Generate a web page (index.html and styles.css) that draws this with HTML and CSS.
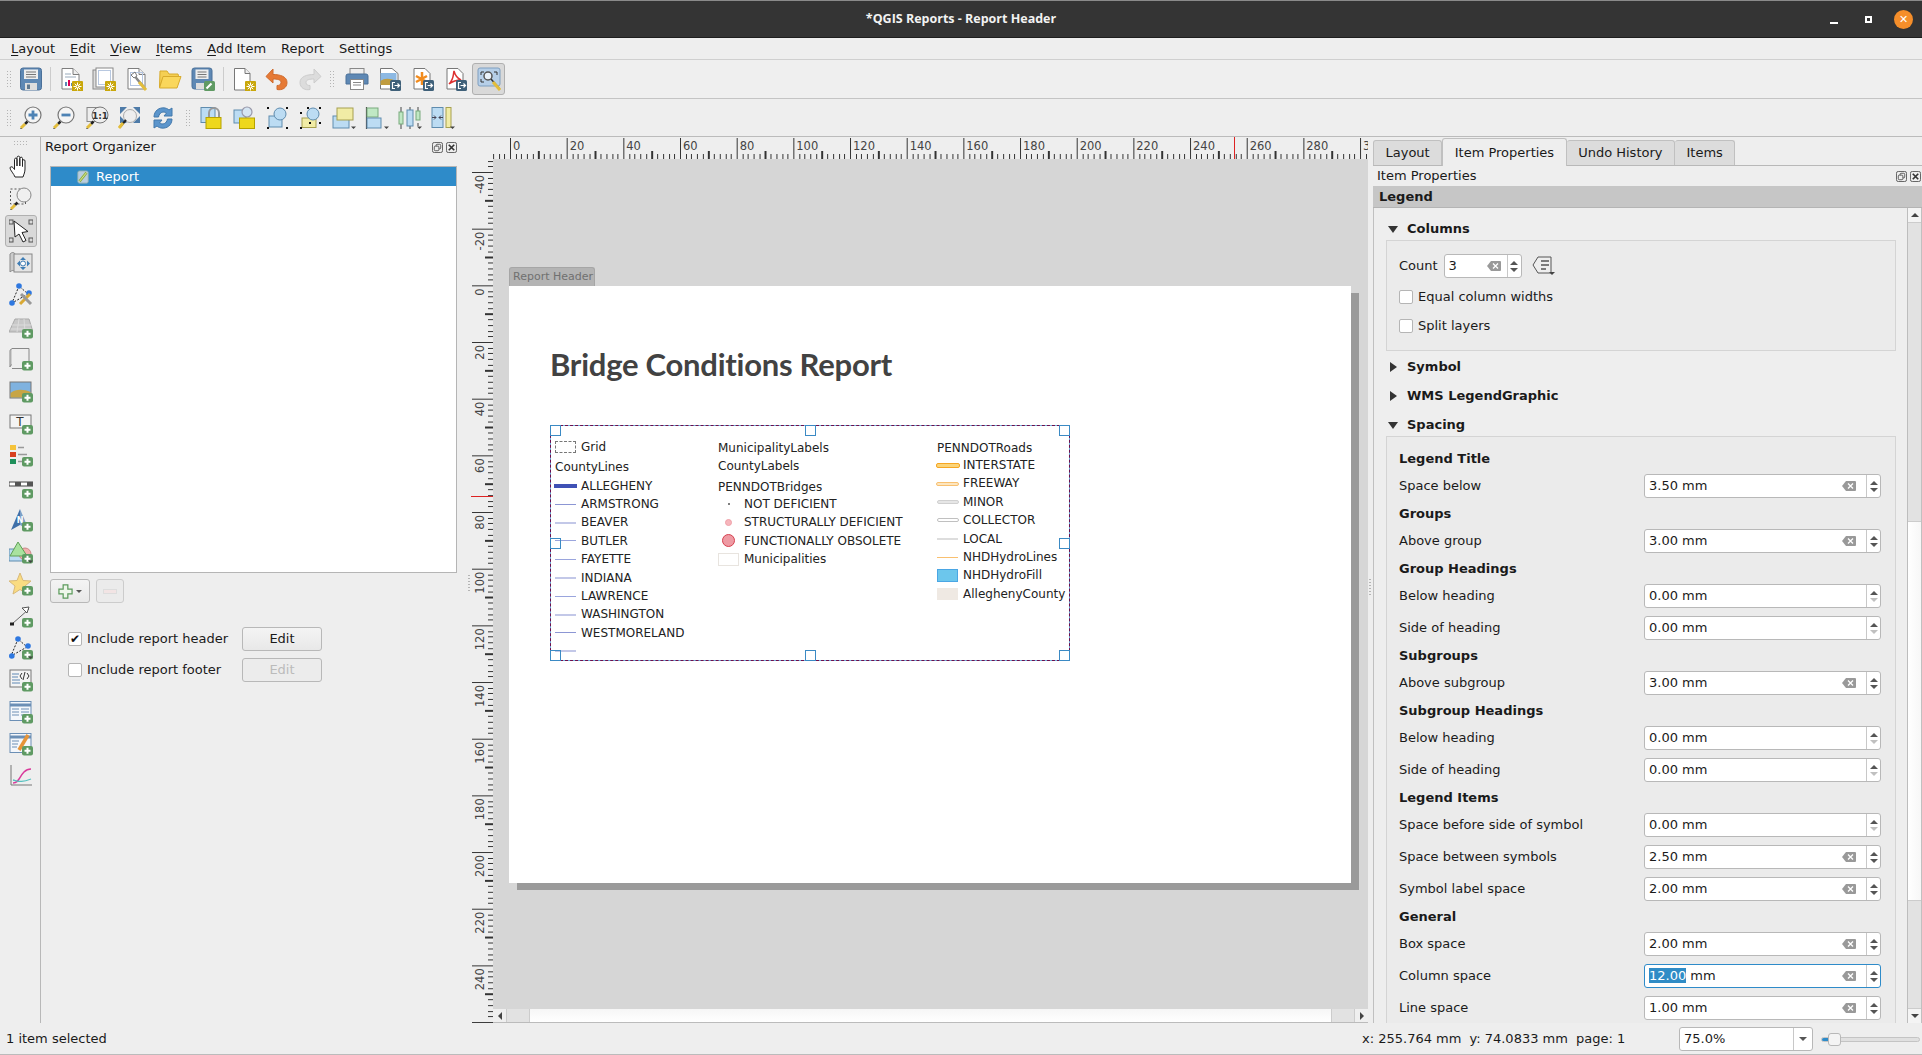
FILE: index.html
```html
<!DOCTYPE html>
<html lang="en">
<head>
<meta charset="utf-8">
<title>*QGIS Reports - Report Header</title>
<link rel="stylesheet" href="styles.css">
</head>
<body>
<svg class="defs" aria-hidden="true">
<defs>
<g id="plusb"><rect x="13" y="14" width="11" height="9.5" rx="2" fill="#5f9a63"/><path d="M18.5 15.7v6M15.5 18.7h6" stroke="#fff" stroke-width="2" fill="none"/></g>
<g id="gearb"><rect x="13" y="14" width="11" height="11" rx="1" fill="#c9a70a"/><circle cx="18.5" cy="19.5" r="2" fill="#fff"/><path d="M18.5 15.5v8M14.5 19.5h8M15.7 16.7l5.6 5.6M21.3 16.7l-5.6 5.6" stroke="#fff" stroke-width="1"/><circle cx="18.5" cy="19.5" r=".9" fill="#c9a70a"/></g>
<g id="expb"><rect x="12" y="13" width="11" height="11" rx="1.5" fill="#3f6079"/><path d="M17 15.500h-2.500v6H17M16.500 18.500h5M19.500 16.500l2 2-2 2" stroke="#fff" stroke-width="1.200" fill="none"/></g>
<g id="magh"><path d="M8.500 15.500L6 18" stroke="#222" stroke-width="2.500"/><path d="M6 18l-4 4" stroke="#e3bd3b" stroke-width="3"/><path d="M2.500 23l-1-1" stroke="#222"/></g>
<g id="page"><path d="M3 1.500h11l6 6V22H3z" fill="#fff" stroke="#7d7d7d"/><path d="M14 1.500v6h6" fill="#eee" stroke="#7d7d7d"/></g>
<g id="drop"><path d="M19 20.500h5l-2.500 2.500z" fill="#444"/></g>
</defs>
<symbol id="i-save" viewBox="0 0 24 24"><rect x="1.500" y="1" width="21" height="22" rx="2.500" fill="#5e88b4" stroke="#4a7099"/><rect x="5" y="2.500" width="14" height="9.500" fill="#eee"/><path d="M7 5h10M7 7.500h10M7 10h10" stroke="#777"/><rect x="6" y="16" width="12" height="7" fill="#ddd"/><rect x="8" y="17.500" width="3" height="4.500" fill="#5e7890"/></symbol>
<symbol id="i-report" viewBox="0 0 24 24"><use href="#page"/><path d="M6 7h6M6 10h11" stroke="#9ab"/><path d="M7 19v-4M13 19v-3" stroke-width="2" fill="none" stroke="#5a8ab5"/><path d="M10 19v-6" stroke="#d05" stroke-width="2"/><use href="#gearb"/></symbol>
<symbol id="i-manage" viewBox="0 0 24 24"><rect x="1" y="3" width="17" height="19" fill="#ddd" stroke="#888"/><rect x="4" y="1" width="17" height="19" fill="#fff" stroke="#888"/><rect x="6.500" y="3.500" width="12" height="14" fill="none" stroke="#b8c8e0"/><use href="#gearb"/></symbol>
<symbol id="i-wrench" viewBox="0 0 24 24"><use href="#page"/><rect x="5.500" y="5.500" width="12" height="13" fill="none" stroke="#b5c6e2"/><path d="M8 7c1 3 3 3 4 5l7 8" stroke="#888" stroke-width="2.500" fill="none"/><path d="M14 15l7 8" stroke="#e3bd3b" stroke-width="3"/><path d="M6 8l3 3 3-2-2-4z" fill="#fff" stroke="#777"/></symbol>
<symbol id="i-folder" viewBox="0 0 24 24"><path d="M2 4h7l2 3h9l1 4H5L1.500 20z" fill="#f5cf53" stroke="#d8ab2c"/><path d="M5 9.500h18l-4 11.500H1.500z" fill="#fad75c" stroke="#d8ab2c"/></symbol>
<symbol id="i-saveas" viewBox="0 0 24 24"><rect x="1" y="1" width="20" height="21" rx="2.500" fill="#5e88b4" stroke="#4a7099"/><rect x="4.500" y="2.500" width="13" height="9.500" fill="#eee"/><path d="M6.500 5h9M6.500 7.500h9M6.500 10h9" stroke="#777"/><rect x="5" y="16" width="8" height="6" fill="#ddd"/><rect x="13" y="14" width="11" height="10" rx="1.500" fill="#5f9a63"/><path d="M15.500 21.500l5-5" stroke="#fff" stroke-width="2.200"/></symbol>
<symbol id="i-new" viewBox="0 0 24 24"><path d="M2.500 1.500h10.500l5 5V23H2.500z" fill="#fff" stroke="#777"/><path d="M13 1.500v5h5" fill="#eee" stroke="#777"/><use href="#gearb"/></symbol>
<symbol id="i-undo" viewBox="0 0 24 24"><path d="M8 2L1 9.500 8 16v-4c4 0 8 .5 8 3.500 0 2.500-2 3-4 3v4c5 1 10-1.500 10-7 0-6-7-8-14-8z" fill="#e67a36" stroke="#cf6a2c"/></symbol>
<symbol id="i-redo" viewBox="0 0 24 24"><path d="M16 2l7 7.500L16 16v-4c-4 0-8 .5-8 3.500 0 2.500 2 3 4 3v4c-5 1-10-1.500-10-7 0-6 7-8 14-8z" fill="#dcdcdc" stroke="#ccc"/></symbol>
<symbol id="i-print" viewBox="0 0 24 24"><rect x="5" y="1.500" width="14" height="8" fill="#eee" stroke="#888"/><path d="M3 7h18a2 2 0 0 1 2 2v8H1V9a2 2 0 0 1 2-2z" fill="#5e88b4" stroke="#4a7099"/><rect x="5.500" y="12.500" width="13" height="10" fill="#fff" stroke="#888"/><path d="M8 15.500h8M8 18h8" stroke="#888"/></symbol>
<symbol id="i-xpic" viewBox="0 0 24 24"><path d="M2.500 1.500h11.500l6 5V22h-17.500z" fill="#fff" stroke="#777"/><rect x="2.500" y="6" width="16" height="12" fill="#8db9e3"/><path d="M2.500 14c4-3 9-3 16 0v4h-16z" fill="#c09c3f"/><use href="#expb"/></symbol>
<symbol id="i-xsvg" viewBox="0 0 24 24"><path d="M3 1.500h11l5 5V22H3z" fill="#fff" stroke="#777"/><path d="M11 5v13M5 9l11 6M5 15l11-6" stroke="#f28c1e" stroke-width="2.500"/><use href="#expb"/></symbol>
<symbol id="i-xpdf" viewBox="0 0 24 24"><path d="M3 1.500h11l5 5V22H3z" fill="#fff" stroke="#777"/><path d="M10 4c-1 4 0 8-5 13 4-3 8-4 12-4-4-2-6-5-7-9z" fill="none" stroke="#dd3030" stroke-width="1.500"/><use href="#expb"/></symbol>
<symbol id="i-selzoom" viewBox="0 0 24 24"><rect x="1" y="1" width="22" height="18" rx="2" fill="#b6cfe8" stroke="#7f9fc0"/><path d="M4 5h3M4 5v3M20 5h-3M20 5v3M4 15h3M4 15v-3" stroke="#333"/><circle cx="11" cy="9" r="4" fill="#e9f1f9" stroke="#555" stroke-width="1.500"/><path d="M14 12l8 9" stroke="#333" stroke-width="1.500"/><path d="M16 15l7 8" stroke="#e3bd3b" stroke-width="3"/></symbol>
<symbol id="i-zoomin" viewBox="0 0 24 24"><circle cx="14" cy="9" r="8" fill="#f5f5f5" stroke="#777" stroke-width="1.200"/><path d="M14 4.500v9M9.500 9h9" stroke="#4e83b5" stroke-width="2.800"/><use href="#magh"/></symbol>
<symbol id="i-zoomout" viewBox="0 0 24 24"><circle cx="14" cy="9" r="8" fill="#f5f5f5" stroke="#777" stroke-width="1.200"/><path d="M9.500 9h9" stroke="#4e83b5" stroke-width="2.800"/><use href="#magh"/></symbol>
<symbol id="i-zoom11" viewBox="0 0 24 24"><rect x="2" y="1.500" width="13" height="14" fill="#eee" stroke="#888"/><circle cx="15" cy="9" r="8" fill="#eee" stroke="#777"/><use href="#magh"/></symbol>
<symbol id="i-zoomfull" viewBox="0 0 24 24"><path d="M2 1h7L2 8zM22 1h-7l7 7zM22 17h-7l7-7zM2 17V10l7 7" fill="#4e7ba8"/><circle cx="12" cy="10" r="6.500" fill="#eee" stroke="#aaa"/><path d="M8 14L2 21" stroke="#222" stroke-width="2"/><path d="M5 17l-4 5" stroke="#e3bd3b" stroke-width="3"/></symbol>
<symbol id="i-refresh" viewBox="0 0 24 24"><path d="M3 11C3 5 8 1 14 2c2 .5 3 1 4 2l3-2v8h-8l2.500-3c-3-2-7-1-8 4z" fill="#5b95cc" stroke="#4278ab"/><path d="M21 13c0 6-5 10-11 9-2-.5-3-1-4-2l-3 2v-8h8l-2.500 3c3 2 7 1 8-4z" fill="#5b95cc" stroke="#4278ab"/></symbol>
<symbol id="i-lock" viewBox="0 0 24 24"><rect x="1" y="1.500" width="14" height="15" fill="#bcdcf3" stroke="#5f8cae"/><path d="M9 12V7a5 5 0 0 1 10 0v5" fill="none" stroke="#999" stroke-width="2"/><rect x="6" y="11.500" width="15" height="11" fill="#eed81c" stroke="#b6a200"/></symbol>
<symbol id="i-unlock" viewBox="0 0 24 24"><rect x="1" y="4" width="12" height="13" fill="#bcdcf3" stroke="#5f8cae"/><circle cx="14" cy="6" r="5" fill="#d5e5f2" stroke="#99a" stroke-width="1.200"/><rect x="6.500" y="12" width="15" height="10.500" fill="#eed81c" stroke="#b6a200"/></symbol>
<symbol id="i-group" viewBox="0 0 24 24"><rect x="3" y="10" width="13" height="11" fill="#bcdcf3" stroke="#5f8cae"/><circle cx="14" cy="8" r="6" fill="#bcdcf3" stroke="#5f8cae"/><path d="M1 1h2v2H1zM20 1h2v2h-2zM1 21h2v2H1zM20 21h2v2h-2z" fill="#111"/></symbol>
<symbol id="i-ungroup" viewBox="0 0 24 24"><rect x="3" y="12" width="14" height="9.500" fill="#f1eca5" stroke="#a6a050"/><circle cx="14" cy="8" r="6" fill="#bcdcf3" stroke="#5f8cae"/><path d="M1 6h2v2H1zM20 1h2v2h-2zM1 21h2v2H1zM20 16h2v2h-2zM8 1h2v2H8zM10 16h2v2h-2z" fill="#111"/></symbol>
<symbol id="i-raise" viewBox="0 0 24 24"><rect x="1" y="10" width="16" height="12" fill="#bcdcf3" stroke="#5f8cae"/><rect x="5" y="2" width="16" height="12" fill="#f1eca5" stroke="#a6a050"/><use href="#drop"/></symbol>
<symbol id="i-align" viewBox="0 0 24 24"><path d="M1.500 1v22" stroke="#444" stroke-width="1.200"/><rect x="2" y="2" width="11" height="9" fill="#c0e8c4" stroke="#78a97c"/><rect x="2" y="12" width="14" height="10" fill="#bcdcf3" stroke="#5f8cae"/><use href="#drop"/></symbol>
<symbol id="i-dist" viewBox="0 0 24 24"><path d="M3 1v5M3 18v5M12 1v3M12 20v3M20 1v4M20 17v3" stroke="#444"/><rect x="1" y="6" width="4" height="12" fill="#c0e8c4" stroke="#78a97c"/><rect x="9" y="4" width="6" height="16" fill="#bcdcf3" stroke="#5f8cae"/><rect x="18" y="5" width="4" height="9" fill="#c0e8c4" stroke="#78a97c"/><use href="#drop"/></symbol>
<symbol id="i-resize" viewBox="0 0 24 24"><rect x="1" y="1.500" width="11" height="20" fill="#bcdcf3" stroke="#5f8cae"/><rect x="15" y="1.500" width="5" height="20" fill="#f1eca5" stroke="#a6a050"/><path d="M1 11.500h4l-2-2M5 11.500l-2 2M12 11.500H8l2-2M8 11.500l2 2" fill="none" stroke="#445"/><use href="#drop"/></symbol>
<symbol id="i-hand" viewBox="0 0 24 24"><path d="M6 22c-1-3-5-7-5-9 0-1.500 2-1.500 3-.5l1.500 2V4.500c0-1.800 2.500-1.800 2.500 0V11V2.500c0-1.800 2.800-1.800 2.800 0V11V3.500c0-1.800 2.700-1.800 2.700 0V11.500V6c0-1.800 2.500-1.800 2.500 0v8c0 3-1 5-2 8z" fill="#fff" stroke="#222"/></symbol>
<symbol id="i-zrect" viewBox="0 0 24 24"><rect x="1.500" y="2" width="15" height="15" fill="none" stroke="#555" stroke-dasharray="2 2"/><circle cx="15" cy="8" r="7" fill="#f0f0f0" stroke="#888"/><use href="#magh"/></symbol>
<symbol id="i-select" viewBox="0 0 24 24"><rect x="0" y="1" width="4" height="4" fill="none" stroke="#555"/><rect x="20" y="1" width="4" height="4" fill="none" stroke="#555"/><rect x="0" y="19" width="4" height="4" fill="none" stroke="#555"/><rect x="20" y="19" width="4" height="4" fill="none" stroke="#555"/><path d="M5 2l1 16 4-3 4 8 3-1.500-4-8 6-1z" fill="#fff" stroke="#222"/></symbol>
<symbol id="i-move" viewBox="0 0 24 24"><path d="M1 3c2-2 4-2 5 0v18c-1-2-3-2-5 0z" fill="#ccc" stroke="#888"/><rect x="5" y="3" width="18" height="18" fill="#e4e4e4" stroke="#888"/><path d="M14 6l3 3h-6zM14 19l3-3h-6zM8 12.500l3-3v6zM21 12.500l-3-3v6z" fill="#3f7db5"/><circle cx="14" cy="12.500" r="2.500" fill="#fff" stroke="#3f7db5"/></symbol>
<symbol id="i-nodes" viewBox="0 0 24 24"><path d="M10 3L3 20l16-9z" fill="none" stroke="#222" stroke-dasharray="2 1.500"/><circle cx="10" cy="3" r="2.800" fill="#2f78e0"/><circle cx="3" cy="20" r="2.800" fill="#2f78e0"/><circle cx="20" cy="10" r="2.800" fill="#2f78e0"/><path d="M11 21l10-10" stroke="#d9a934" stroke-width="3"/><path d="M12 11l10 10" stroke="#999" stroke-width="3"/></symbol>
<symbol id="i-map" viewBox="0 0 24 24"><path d="M6 4h14l4 13H0z" fill="#c8c8c8" stroke="#aaa"/><path d="M10 4l-2 13M15 4l1 13M3 10h19M1.500 14h21" stroke="#dcdcdc"/><use href="#plusb"/></symbol>
<symbol id="i-sheet" viewBox="0 0 24 24"><path d="M1 4c0-3 5-3 5 0v16c0-3-5-3-5 0z" fill="#d0d0d0" stroke="#888"/><path d="M3 1.500h17v20H3" fill="#eee" stroke="#888"/><use href="#plusb"/></symbol>
<symbol id="i-pic" viewBox="0 0 24 24"><rect x="1" y="3" width="21" height="16" fill="#7fb2df" stroke="#777"/><path d="M1.500 14c5-4 13-4 20-1v5.500h-20z" fill="#c7a545"/><use href="#plusb"/></symbol>
<symbol id="i-label" viewBox="0 0 24 24"><rect x="1" y="4" width="21" height="13" fill="#f4f4f4" stroke="#777"/></symbol>
<symbol id="i-legend" viewBox="0 0 24 24"><rect x="1" y="2" width="6" height="5" fill="#f5c33b"/><rect x="1" y="9" width="6" height="5" fill="#d8401f"/><rect x="1" y="16" width="6" height="5" fill="#1e8f5a"/><path d="M9 4.500h6M9 11.500h9M9 18.500h4" stroke="#999" stroke-width="1.500"/><use href="#plusb"/></symbol>
<symbol id="i-scale" viewBox="0 0 24 24"><rect x="0" y="7" width="24" height="4" fill="#fff" stroke="#444"/><path d="M6 7h6v4H6zM18 7h6v4h-6z" fill="#555"/><use href="#plusb"/></symbol>
<symbol id="i-north" viewBox="0 0 24 24"><path d="M11 1L2 22l9-5z" fill="#3f6fa8"/><path d="M11 1l9 21-9-5z" fill="#7ba0c8"/></symbol>
<symbol id="i-shape" viewBox="0 0 24 24"><rect x="0" y="9" width="17" height="12" fill="#bcdcf3" stroke="#5f8cae"/><ellipse cx="16" cy="14" rx="6" ry="6" fill="#f2b0ae" stroke="#c88"/><path d="M9 2l9 14H1z" fill="#a9e29e" stroke="#5f9f56"/><use href="#plusb"/><use href="#drop"/></symbol>
<symbol id="i-star" viewBox="0 0 24 24"><path d="M11 1l3 7.500 8 .5-6 5 2 8-7-4.500L4 22l2-8-6-5 8-.5z" fill="#fadc82" stroke="#d8b979"/><use href="#plusb"/></symbol>
<symbol id="i-arrow" viewBox="0 0 24 24"><path d="M3 20L20 5" stroke="#666"/><path d="M20 3l-7 1 5 5z" fill="#fff" stroke="#555"/><rect x="1" y="18.500" width="4" height="3" fill="#222"/><use href="#plusb"/></symbol>
<symbol id="i-node" viewBox="0 0 24 24"><path d="M9 3L2 20l16-9z" fill="none" stroke="#222" stroke-dasharray="2 1.500"/><circle cx="9" cy="3" r="2.800" fill="#2f78e0"/><circle cx="2.800" cy="20" r="2.800" fill="#2f78e0"/><circle cx="19" cy="10" r="2.800" fill="#2f78e0"/><use href="#plusb"/><use href="#drop"/></symbol>
<symbol id="i-html" viewBox="0 0 24 24"><rect x="1" y="2" width="21" height="17" fill="#f4f4f4" stroke="#777"/><path d="M3 6h7M3 9h6M3 12h8M3 15h8" stroke="#5e88b4" stroke-width="1.200"/><path d="M13 5l-2 3 2 3M16 4l-2 8M18 5l2 3-2 3" stroke="#333" fill="none"/><use href="#plusb"/></symbol>
<symbol id="i-table" viewBox="0 0 24 24"><rect x="1" y="1.500" width="21" height="19" fill="#f4f7fb" stroke="#6c8fb5"/><path d="M1 5h21" stroke="#6c8fb5" stroke-width="3"/><path d="M3 9h7M3 12h7M3 15h7M12 9h8M12 12h8M12 15h5" stroke="#6c8fb5"/><use href="#plusb"/></symbol>
<symbol id="i-ftable" viewBox="0 0 24 24"><rect x="1" y="1.500" width="21" height="19" fill="#f4f7fb" stroke="#6c8fb5"/><path d="M1 5h21" stroke="#6c8fb5" stroke-width="3"/><path d="M3 9h7M3 12h6M3 15h5" stroke="#6c8fb5"/><path d="M10 18L19 3" stroke="#e69438" stroke-width="3.500"/><use href="#plusb"/></symbol>
<symbol id="i-chart" viewBox="0 0 24 24"><path d="M2 1v20h21" fill="none" stroke="#777"/><path d="M4 19c6 0 6-6 11-11 3-3 5-3 7-3" stroke="#d93a9b" fill="none" stroke-width="1.500"/><path d="M4 16c5 1 8 3 18-1" stroke="#56c2c0" fill="none" stroke-width="1.300"/></symbol>
<symbol id="i-treerep" viewBox="0 0 16 16"><rect x="2" y="1" width="12" height="14" rx="2" fill="#b9cde0" stroke="#8aa"/><path d="M4 13L12 3" stroke="#8db33f" stroke-width="3"/><path d="M4 13L12 3" stroke="#e8e6a5" stroke-width="1"/></symbol>
<symbol id="i-float" viewBox="0 0 12 12"><rect x=".5" y=".5" width="11" height="11" rx="2" fill="none" stroke="#555"/><rect x="4.500" y="2.500" width="5" height="5" rx="1" fill="none" stroke="#555"/><rect x="2.500" y="4.500" width="5" height="5" rx="1" fill="#eee" stroke="#555"/></symbol>
<symbol id="i-close" viewBox="0 0 12 12"><rect x=".5" y=".5" width="11" height="11" rx="2" fill="none" stroke="#555"/><path d="M3 3l6 6M9 3l-6 6" stroke="#333" stroke-width="1.800"/></symbol>
<symbol id="i-clear" viewBox="0 0 14 12"><path d="M4 1h9a1 1 0 0 1 1 1v8a1 1 0 0 1-1 1H4L0 6z" fill="#999"/><path d="M6 3.500l5 5M11 3.500l-5 5" stroke="#fff" stroke-width="1.300"/></symbol>
<symbol id="i-addplus" viewBox="0 0 16 16"><path d="M5.500 1h5v4.500H15v5h-4.500V15h-5v-4.500H1v-5h4.500z" fill="#eef6ea" stroke="#5b9a5b" stroke-width="1.300"/></symbol>
<symbol id="i-cols" viewBox="0 0 24 24"><path d="M6 3h13v16H6L1 11z" fill="#eee" stroke="#555"/><path d="M9 7h8M9 11h8M9 15h5" stroke="#555" stroke-width="1.500"/><path d="M17 18h6l-3 3z" fill="#444"/></symbol>
</svg>

<div class="window">
<header class="titlebar">
  <span class="wintitle">*QGIS Reports - Report Header</span>
  <div class="winbtns"><span class="wb-min"></span><span class="wb-max"></span><span class="wb-close">✕</span></div>
</header>
<nav class="menubar">
  <span class="mi"><u>L</u>ayout</span><span class="mi"><u>E</u>dit</span><span class="mi"><u>V</u>iew</span><span class="mi"><u>I</u>tems</span><span class="mi"><u>A</u>dd Item</span><span class="mi">Report</span><span class="mi">Settings</span>
</nav>
<div class="toolbar">
  <span class="grip"></span>
  <span class="tb"><svg class="ic"><use href="#i-save"/></svg></span>
  <span class="sep"></span>
  <span class="tb"><svg class="ic"><use href="#i-report"/></svg></span>
  <span class="tb"><svg class="ic"><use href="#i-manage"/></svg></span>
  <span class="tb"><svg class="ic"><use href="#i-wrench"/></svg></span>
  <span class="tb"><svg class="ic"><use href="#i-folder"/></svg></span>
  <span class="tb"><svg class="ic"><use href="#i-saveas"/></svg></span>
  <span class="sep"></span>
  <span class="tb"><svg class="ic"><use href="#i-new"/></svg></span>
  <span class="tb"><svg class="ic"><use href="#i-undo"/></svg></span>
  <span class="tb"><svg class="ic"><use href="#i-redo"/></svg></span>
  <span class="grip grip-mid"></span>
  <span class="tb"><svg class="ic"><use href="#i-print"/></svg></span>
  <span class="tb"><svg class="ic"><use href="#i-xpic"/></svg></span>
  <span class="tb"><svg class="ic"><use href="#i-xsvg"/></svg></span>
  <span class="tb"><svg class="ic"><use href="#i-xpdf"/></svg></span>
  <span class="tb tb-on"><svg class="ic"><use href="#i-selzoom"/></svg></span>
</div>
<div class="toolbar toolbar-b">
  <span class="grip"></span>
  <span class="tb"><svg class="ic"><use href="#i-zoomin"/></svg></span>
  <span class="tb"><svg class="ic"><use href="#i-zoomout"/></svg></span>
  <span class="tb"><svg class="ic" viewBox="0 0 24 24"><use href="#i-zoom11" width="24" height="24"/><text x="15" y="13" class="svg-bold" text-anchor="middle">1:1</text></svg></span>
  <span class="tb"><svg class="ic"><use href="#i-zoomfull"/></svg></span>
  <span class="tb"><svg class="ic"><use href="#i-refresh"/></svg></span>
  <span class="grip grip-wide"></span>
  <span class="tb"><svg class="ic"><use href="#i-lock"/></svg></span>
  <span class="tb"><svg class="ic"><use href="#i-unlock"/></svg></span>
  <span class="tb"><svg class="ic"><use href="#i-group"/></svg></span>
  <span class="tb"><svg class="ic"><use href="#i-ungroup"/></svg></span>
  <span class="tb"><svg class="ic"><use href="#i-raise"/></svg></span>
  <span class="tb"><svg class="ic"><use href="#i-align"/></svg></span>
  <span class="tb"><svg class="ic"><use href="#i-dist"/></svg></span>
  <span class="tb"><svg class="ic"><use href="#i-resize"/></svg></span>
</div>

<main class="main">
  <aside class="sidetools">
    <span class="grip-h"></span>
    <span class="st"><svg class="ic"><use href="#i-hand"/></svg></span>
    <span class="st"><svg class="ic"><use href="#i-zrect"/></svg></span>
    <span class="st st-on"><svg class="ic"><use href="#i-select"/></svg></span>
    <span class="st"><svg class="ic"><use href="#i-move"/></svg></span>
    <span class="st"><svg class="ic"><use href="#i-nodes"/></svg></span>
    <span class="st"><svg class="ic"><use href="#i-map"/></svg></span>
    <span class="st"><svg class="ic"><use href="#i-sheet"/></svg></span>
    <span class="st"><svg class="ic"><use href="#i-pic"/></svg></span>
    <span class="st"><svg class="ic" viewBox="0 0 24 24"><use href="#i-label" width="24" height="24"/><text x="11" y="15" class="svg-t" text-anchor="middle">T</text><use href="#plusb"/></svg></span>
    <span class="st"><svg class="ic"><use href="#i-legend"/></svg></span>
    <span class="st"><svg class="ic"><use href="#i-scale"/></svg></span>
    <span class="st"><svg class="ic" viewBox="0 0 24 24"><use href="#i-north" width="24" height="24"/><text x="11" y="15" class="svg-n" text-anchor="middle">N</text><use href="#plusb"/></svg></span>
    <span class="st"><svg class="ic"><use href="#i-shape"/></svg></span>
    <span class="st"><svg class="ic"><use href="#i-star"/></svg></span>
    <span class="st"><svg class="ic"><use href="#i-arrow"/></svg></span>
    <span class="st"><svg class="ic"><use href="#i-node"/></svg></span>
    <span class="st"><svg class="ic"><use href="#i-html"/></svg></span>
    <span class="st"><svg class="ic"><use href="#i-table"/></svg></span>
    <span class="st"><svg class="ic"><use href="#i-ftable"/></svg></span>
    <span class="st"><svg class="ic"><use href="#i-chart"/></svg></span>
  </aside>

  <section class="organizer">
    <div class="dock-title"><span>Report Organizer</span><span class="dock-btns"><svg class="db"><use href="#i-float"/></svg><svg class="db"><use href="#i-close"/></svg></span></div>
    <div class="tree">
      <div class="tree-row"><svg class="tree-ic"><use href="#i-treerep"/></svg><span>Report</span></div>
    </div>
    <div class="tree-tools">
      <span class="btn btn-add"><svg class="add-ic"><use href="#i-addplus"/></svg><span class="caret"></span></span>
      <span class="btn btn-rem"><span class="minus"></span></span>
    </div>
    <div class="incl">
      <span class="check check-on">✔</span><span>Include report header</span><span class="btn btn-edit">Edit</span>
      <span class="check"></span><span>Include report footer</span><span class="btn btn-edit btn-off">Edit</span>
    </div>
  </section>
  <span class="split split-l"></span>

  <section class="canvas">
    <div class="corner"></div>
    <svg class="hruler" width="875" height="22">
      <defs>
        <pattern id="ht" patternUnits="userSpaceOnUse" x="17" y="0" width="56.67" height="22">
          <path d="M.5 17v5M6.170 17v5M11.830 17v5M17.500 17v5M23.170 17v5M28.830 14v8M34.500 17v5M40.170 17v5M45.830 17v5M51.500 17v5" stroke="#333" shape-rendering="crispEdges"/>
          <path d="M.5 1v21" stroke="#333" shape-rendering="crispEdges"/>
        </pattern>
      </defs>
      <rect width="875" height="22" fill="url(#ht)"/>
      <path d="M741.500 0v22" stroke="#d22" shape-rendering="crispEdges"/>
      <g class="rl">
        <text x="20" y="13">0</text><text x="76.700" y="13">20</text><text x="133.300" y="13">40</text><text x="190" y="13">60</text><text x="246.700" y="13">80</text><text x="303.300" y="13">100</text><text x="360" y="13">120</text><text x="416.700" y="13">140</text><text x="473.300" y="13">160</text><text x="530" y="13">180</text><text x="586.700" y="13">200</text><text x="643.300" y="13">220</text><text x="700" y="13">240</text><text x="756.700" y="13">260</text><text x="813.300" y="13">280</text><text x="870" y="13">300</text>
      </g>
    </svg>
    <svg class="vruler" width="23" height="864">
      <defs>
        <pattern id="vt" patternUnits="userSpaceOnUse" x="0" y="13" width="23" height="56.67">
          <path d="M18 .5h5M18 6.170h5M18 11.830h5M18 17.500h5M18 23.170h5M15 28.830h8M18 34.500h5M18 40.170h5M18 45.830h5M18 51.500h5" stroke="#333" shape-rendering="crispEdges"/>
          <path d="M2 .5h21" stroke="#333" shape-rendering="crispEdges"/>
        </pattern>
      </defs>
      <rect width="23" height="864" fill="url(#vt)"/>
      <path d="M1 337.500h22" stroke="#d22" shape-rendering="crispEdges"/>
      <g class="rl rl-v">
        <text transform="translate(14 16) rotate(-90)">-40</text><text transform="translate(14 72.700) rotate(-90)">-20</text><text transform="translate(14 129.300) rotate(-90)">0</text><text transform="translate(14 186) rotate(-90)">20</text><text transform="translate(14 242.700) rotate(-90)">40</text><text transform="translate(14 299.300) rotate(-90)">60</text><text transform="translate(14 356) rotate(-90)">80</text><text transform="translate(14 412.700) rotate(-90)">100</text><text transform="translate(14 469.300) rotate(-90)">120</text><text transform="translate(14 526) rotate(-90)">140</text><text transform="translate(14 582.700) rotate(-90)">160</text><text transform="translate(14 639.300) rotate(-90)">180</text><text transform="translate(14 696) rotate(-90)">200</text><text transform="translate(14 752.700) rotate(-90)">220</text><text transform="translate(14 809.300) rotate(-90)">240</text>
      </g>
    </svg>
    <div class="view">
      <div class="pagetab">Report Header</div>
      <div class="paper">
        <h1 class="doc-title">Bridge Conditions Report</h1>
        <div class="legend">
          <div class="lcol lcol-1">
            <div class="lr"><span class="sym"><i class="s-grid"></i></span>Grid</div>
            <div class="lr lr-gap lr-head">CountyLines</div>
            <div class="lr"><span class="sym"><i class="s-alle"></i></span>ALLEGHENY</div>
            <div class="lr"><span class="sym"><i class="s-l1"></i></span>ARMSTRONG</div>
            <div class="lr"><span class="sym"><i class="s-l2"></i></span>BEAVER</div>
            <div class="lr"><span class="sym"><i class="s-l3"></i></span>BUTLER</div>
            <div class="lr"><span class="sym"><i class="s-l3"></i></span>FAYETTE</div>
            <div class="lr"><span class="sym"><i class="s-l2"></i></span>INDIANA</div>
            <div class="lr"><span class="sym"><i class="s-l3"></i></span>LAWRENCE</div>
            <div class="lr"><span class="sym"><i class="s-l2"></i></span>WASHINGTON</div>
            <div class="lr"><span class="sym"><i class="s-l1"></i></span>WESTMORELAND</div>
            <div class="lr"><span class="sym"><i class="s-l2"></i></span></div>
          </div>
          <div class="lcol lcol-2">
            <div class="lr">MunicipalityLabels</div>
            <div class="lr">CountyLabels</div>
            <div class="lr lr-gap">PENNDOTBridges</div>
            <div class="lr lr-up"><span class="sym"><i class="s-dot"></i></span>NOT DEFICIENT</div>
            <div class="lr"><span class="sym"><i class="s-c1"></i></span>STRUCTURALLY DEFICIENT</div>
            <div class="lr"><span class="sym"><i class="s-c2"></i></span>FUNCTIONALLY OBSOLETE</div>
            <div class="lr"><span class="sym"><i class="s-muni"></i></span>Municipalities</div>
          </div>
          <div class="lcol lcol-3">
            <div class="lr">PENNDOTRoads</div>
            <div class="lr lr-upb"><span class="sym"><i class="s-inter"></i></span>INTERSTATE</div>
            <div class="lr"><span class="sym"><i class="s-free"></i></span>FREEWAY</div>
            <div class="lr"><span class="sym"><i class="s-minor"></i></span>MINOR</div>
            <div class="lr"><span class="sym"><i class="s-coll"></i></span>COLLECTOR</div>
            <div class="lr"><span class="sym"><i class="s-local"></i></span>LOCAL</div>
            <div class="lr"><span class="sym"><i class="s-hl"></i></span>NHDHydroLines</div>
            <div class="lr"><span class="sym"><i class="s-hf"></i></span>NHDHydroFill</div>
            <div class="lr"><span class="sym"><i class="s-ac"></i></span>AlleghenyCounty</div>
          </div>
          <span class="hd hd-tl"></span><span class="hd hd-tm"></span><span class="hd hd-tr"></span>
          <span class="hd hd-ml"></span><span class="hd hd-mr"></span>
          <span class="hd hd-bl"></span><span class="hd hd-bm"></span><span class="hd hd-br"></span>
        </div>
      </div>
    </div>
    <div class="hscroll">
      <span class="hs-arrow"><i class="tri-l"></i></span><span class="hs-track"></span><span class="hs-thumb"></span><span class="hs-track"></span><span class="hs-arrow"><i class="tri-r"></i></span>
    </div>
  </section>
  <span class="split split-r"></span>

  <section class="props">
    <div class="tabs">
      <span class="tab tab-first">Layout</span><span class="tab tab-on">Item Properties</span><span class="tab">Undo History</span><span class="tab">Items</span>
    </div>
    <div class="dock-title dock-title-r"><span>Item Properties</span><span class="dock-btns"><svg class="db"><use href="#i-float"/></svg><svg class="db"><use href="#i-close"/></svg></span></div>
    <div class="legend-bar">Legend</div>
    <div class="props-body">
      <div class="props-scroll">
        <div class="gh"><i class="tri-d"></i>Columns</div>
        <div class="gbox gbox-cols">
          <div class="count-row"><span>Count</span>
            <span class="spin spin-count"><span class="val">3</span><svg class="clr"><use href="#i-clear"/></svg><span class="arrows"><i class="up"></i><i class="dn"></i></span></span>
            <svg class="cols-ic"><use href="#i-cols"/></svg>
          </div>
          <div class="chk-row"><span class="check"></span>Equal column widths</div>
          <div class="chk-row"><span class="check"></span>Split layers</div>
        </div>
        <div class="gh gh-sp"><i class="tri-r2"></i>Symbol</div>
        <div class="gh gh-sp"><i class="tri-r2"></i>WMS LegendGraphic</div>
        <div class="gh gh-sp"><i class="tri-d"></i>Spacing</div>
        <div class="gbox gbox-sp">
          <div class="sh">Legend Title</div>
          <div class="sr"><span>Space below</span><span class="spin"><span class="val">3.50 mm</span><svg class="clr"><use href="#i-clear"/></svg><span class="arrows"><i class="up"></i><i class="dn"></i></span></span></div>
          <div class="sh">Groups</div>
          <div class="sr"><span>Above group</span><span class="spin"><span class="val">3.00 mm</span><svg class="clr"><use href="#i-clear"/></svg><span class="arrows"><i class="up"></i><i class="dn"></i></span></span></div>
          <div class="sh">Group Headings</div>
          <div class="sr"><span>Below heading</span><span class="spin"><span class="val">0.00 mm</span><span class="arrows arrows-min"><i class="up"></i><i class="dn"></i></span></span></div>
          <div class="sr"><span>Side of heading</span><span class="spin"><span class="val">0.00 mm</span><span class="arrows arrows-min"><i class="up"></i><i class="dn"></i></span></span></div>
          <div class="sh">Subgroups</div>
          <div class="sr"><span>Above subgroup</span><span class="spin"><span class="val">3.00 mm</span><svg class="clr"><use href="#i-clear"/></svg><span class="arrows"><i class="up"></i><i class="dn"></i></span></span></div>
          <div class="sh">Subgroup Headings</div>
          <div class="sr"><span>Below heading</span><span class="spin"><span class="val">0.00 mm</span><span class="arrows arrows-min"><i class="up"></i><i class="dn"></i></span></span></div>
          <div class="sr"><span>Side of heading</span><span class="spin"><span class="val">0.00 mm</span><span class="arrows arrows-min"><i class="up"></i><i class="dn"></i></span></span></div>
          <div class="sh">Legend Items</div>
          <div class="sr"><span>Space before side of symbol</span><span class="spin"><span class="val">0.00 mm</span><span class="arrows arrows-min"><i class="up"></i><i class="dn"></i></span></span></div>
          <div class="sr"><span>Space between symbols</span><span class="spin"><span class="val">2.50 mm</span><svg class="clr"><use href="#i-clear"/></svg><span class="arrows"><i class="up"></i><i class="dn"></i></span></span></div>
          <div class="sr"><span>Symbol label space</span><span class="spin"><span class="val">2.00 mm</span><svg class="clr"><use href="#i-clear"/></svg><span class="arrows"><i class="up"></i><i class="dn"></i></span></span></div>
          <div class="sh">General</div>
          <div class="sr"><span>Box space</span><span class="spin"><span class="val">2.00 mm</span><svg class="clr"><use href="#i-clear"/></svg><span class="arrows"><i class="up"></i><i class="dn"></i></span></span></div>
          <div class="sr"><span>Column space</span><span class="spin spin-focus"><span class="val"><mark class="sel">12.00</mark> mm</span><svg class="clr"><use href="#i-clear"/></svg><span class="arrows"><i class="up"></i><i class="dn"></i></span></span></div>
          <div class="sr"><span>Line space</span><span class="spin"><span class="val">1.00 mm</span><svg class="clr"><use href="#i-clear"/></svg><span class="arrows"><i class="up"></i><i class="dn"></i></span></span></div>
        </div>
      </div>
      <div class="vscroll">
        <span class="vs-arrow"><i class="tri-u"></i></span><span class="vs-track vs-track-a"></span><span class="vs-thumb"></span><span class="vs-track vs-track-b"></span><span class="vs-arrow"><i class="tri-d2"></i></span>
      </div>
    </div>
  </section>
</main>

<footer class="status">
  <span class="st-msg">1 item selected</span>
  <span class="coords"><span>x: 255.764 mm</span><span>y: 74.0833 mm</span><span>page: 1</span></span>
  <span class="combo"><span class="combo-val">75.0%</span><span class="combo-arrow"><i class="dn"></i></span></span>
  <span class="slider"><span class="slider-fill"></span><span class="slider-knob"></span></span>
</footer>
</div>
</body>
</html>
```

FILE: styles.css
```css
* { box-sizing: border-box; }
html, body { margin: 0; padding: 0; }
body { width: 1922px; height: 1055px; overflow: hidden; background: #eee; color: #1a1a1a;
  font: 13px/1.2 "DejaVu Sans", sans-serif; }
.defs { position: absolute; width: 0; height: 0; }
.svg-bold { font: bold 9px "DejaVu Sans", sans-serif; fill: #333; }
.svg-t { font: 12px "DejaVu Sans", sans-serif; fill: #333; }
.svg-n { font: bold 8px "DejaVu Sans", sans-serif; fill: #fff; }
.window { display: flex; flex-direction: column; width: 1922px; height: 1055px; }

.titlebar { height: 38px; flex: none; background: #343434; border-top: 1px solid #8a8a8a; border-bottom: 1px solid #1e1e1e;
  position: relative; display: flex; align-items: center; justify-content: center; }
.wintitle { color: #f2f2f2; font: bold 12.500px "Open Sans", sans-serif; margin-top: -1px; }
.winbtns { position: absolute; right: 9px; top: 9px; display: flex; align-items: center; }
.wb-min { width: 8px; height: 2px; background: #fff; margin-top: 6px; margin-right: 27px; }
.wb-max { width: 7px; height: 7px; border: 2px solid #fff; background: #333; margin-right: 22px; margin-top: -1px; }
.wb-close { width: 19px; height: 19px; border-radius: 50%; background: #f58e2a; color: #fff; font: bold 11px/19px "DejaVu Sans"; text-align: center; }

.menubar { height: 22px; flex: none; display: flex; align-items: center; border-bottom: 1px solid #cfcfcf; padding-left: 11px; gap: 14.900px; }
.mi u { text-decoration-thickness: 1px; text-underline-offset: 2px; }

.toolbar { height: 39px; flex: none; display: flex; align-items: center; border-bottom: 1px solid #c4c4c4; background: #efefef; }
.toolbar-b { height: 38px; background: #eee; border-bottom: 1px solid #bbb; }
.grip { width: 14px; height: 18px; flex: none; background: radial-gradient(circle, #b4b4b4 .7px, transparent .9px) 0 0 / 3px 3px; background-clip: content-box; padding: 0 3px 0 6px; }
.grip-mid { width: 14px; padding: 0 5px 0 3px; }
.grip-wide { width: 16px; padding: 0 5px 0 5px; }
.sep { width: 7.500px; height: 24px; flex: none; background: linear-gradient(#ccc, #ccc) 3px 0 / 1px 100% no-repeat; }
.tb { width: 33px; height: 32px; flex: none; display: flex; align-items: center; justify-content: center; }
.tb-on { background: #d9d9d9; border: 1px solid #b0b0b0; border-radius: 3px; }
.ic { width: 24px; height: 24px; display: block; }

.main { flex: 1; display: flex; min-height: 0; position: relative; }
.split { position: absolute; width: 2px; height: 17px; top: 437px; background: radial-gradient(circle, #b4b4b4 .7px, transparent .9px) 0 0 / 2px 3px; }
.split-l { left: 468px; }
.split-r { left: 1369px; top: 441px; }
.sidetools { width: 41px; flex: none; border-right: 1px solid #b8b8b8; display: flex; flex-direction: column; align-items: center; padding-left: 2px; }
.grip-h { height: 13.500px; width: 16px; flex: none; background: radial-gradient(circle, #b4b4b4 .7px, transparent .9px) 0 3px / 3px 3px; background-clip: content-box; padding: 3px 0 5px; }
.st { width: 32px; height: 32.100px; flex: none; display: flex; align-items: center; justify-content: center; }
.st-on { background: #d9d9d9; border: 1px solid #b0b0b0; border-radius: 3px; }

.organizer { width: 429px; flex: none; display: flex; flex-direction: column; padding: 0 13px 0 9px; }
.dock-title { height: 20px; flex: none; display: flex; justify-content: space-between; align-items: center; padding-left: 0; margin-left: -5px; }
.dock-btns { display: flex; gap: 3px; }
.db { width: 11px; height: 11px; display: block; }
.tree { height: 407px; flex: none; margin-top: 9px; background: #fff; border: 1px solid #b5b5b5; }
.tree-row { height: 19px; background: #2e8bc9; color: #fff; display: flex; align-items: center; padding-left: 25px; }
.tree-ic { width: 14px; height: 14px; margin-right: 6px; }
.tree-tools { display: flex; gap: 6px; margin-top: 6px; }
.btn { display: flex; align-items: center; justify-content: center; border: 1px solid #b8b8b8; border-radius: 3px; background: linear-gradient(#f4f4f4, #e8e8e8); }
.btn-add { width: 40px; height: 24px; }
.add-ic { width: 15px; height: 15px; }
.caret { width: 0; height: 0; border: 3px solid transparent; border-top: 3px solid #555; border-bottom: 0; margin-left: 3px; }
.btn-rem { width: 28px; height: 24px; background: #ebebeb; border-color: #ccc; }
.minus { width: 14px; height: 5px; background: #f2e4e4; border: 1px solid #ddd; }
.incl { display: grid; grid-template-columns: 14px 150px 80px; column-gap: 5px; row-gap: 7px; align-items: center; margin: 24px 0 0 18px; }
.check { width: 14px; height: 14px; flex: none; background: #fff; border: 1px solid #b5b5b5; border-radius: 2px; display: flex; align-items: center; justify-content: center; font-size: 12px; line-height: 1; }
.check-on { color: #111; }
.btn-edit { height: 24px; width: 80px; }
.btn-off { color: #bbb; background: #ececec; }

.canvas { width: 898px; flex: none; display: grid; grid-template-columns: 23px 875px; grid-template-rows: 22px 850px 14px; margin-right: 5px; }
.corner { background: #eee; }
.hruler, .vruler { display: block; background: #eee; overflow: hidden; }
.vruler { grid-row: 2 / 4; grid-column: 1; }
.rl text { font: 11.500px "DejaVu Sans", sans-serif; fill: #444; }
.rl-v text { text-anchor: end; }
.view { background: #d6d6d6; position: relative; overflow: hidden; }
.pagetab { position: absolute; left: 16px; top: 108px; width: 86px; height: 19px; background: #b4b4b4; border: 1px solid #a6a6a6; border-bottom: 0; border-radius: 3px 3px 0 0; color: #707070; font-size: 11px; line-height: 18px; padding-left: 3px; white-space: nowrap; }
.paper { position: absolute; left: 16px; top: 127px; width: 842px; height: 597px; background: #fff; box-shadow: 8px 7px 0 #9a9a9a; }
.doc-title { position: absolute; left: 41px; top: 58px; margin: 0; font: bold 31px/40px Lato, sans-serif; letter-spacing: -.25px; color: #424242; white-space: nowrap; }
.legend { position: absolute; left: 41px; top: 139px; width: 520px; height: 236px; display: flex; font-size: 12px; color: #222; border: 1px dashed #6d0f4d;
  background: linear-gradient(#fff, #fff) padding-box, #6fb1dc border-box; }
.lcol { display: flex; flex-direction: column; }
.lcol-1 { width: 167px; padding: 12px 0 0 4px; }
.lcol-2 { width: 219px; padding: 13px 0 0 0; }
.lcol-3 { flex: 1; padding: 13px 0 0 0; }
.lr { height: 18.400px; display: flex; align-items: center; white-space: nowrap; flex: none; }
.lr-gap { margin-top: 1.800px; }
.lr-up { margin-top: -1px; }
.lr-upb { margin-top: -1.400px; }
.sym { width: 21px; margin-right: 5px; height: 14px; display: flex; align-items: center; justify-content: center; flex: none; }
.sym i { display: block; flex: none; }
.s-grid { width: 21px; height: 12px; border: 1px dashed #777; }
.s-alle { width: 23px; height: 4px; background: #3f51b5; }
.s-l1 { width: 21px; height: 1px; background: #8c96d4; }
.s-l2 { width: 21px; height: 2px; background: #c3c8e8; }
.s-l3 { width: 21px; height: 1px; background: #9aa5dd; }
.s-dot { width: 2px; height: 2px; background: #555; border-radius: 50%; }
.s-c1 { width: 7px; height: 7px; border-radius: 50%; background: #f6b6bc; border: 1px solid #f0a0a8; }
.s-c2 { width: 13px; height: 13px; border-radius: 50%; background: #ee9aa3; border: 1px solid #d6404f; }
.s-muni { width: 21px; height: 13px; border: 1px solid #e8e4df; background: #fff; }
.s-inter { width: 24px; height: 5px; border-radius: 2px; background: #fbd479; border: 1px solid #f5a623; }
.s-free { width: 23px; height: 4px; border-radius: 2px; background: #fde6bf; border: 1px solid #f8c070; }
.s-minor { width: 22px; height: 4px; border-radius: 2px; background: #e6e6e6; border: 1px solid #d0d0d0; }
.s-coll { width: 22px; height: 4px; border-radius: 2px; background: #fff; border: 1px solid #c0c0c0; }
.s-local { width: 21px; height: 2px; background: #ddd; }
.s-hl { width: 21px; height: 1px; background: #f9c070; }
.s-hf { width: 21px; height: 13px; background: #6cc6ec; border: 1px solid #4aa6e4; }
.s-ac { width: 21px; height: 12px; background: #efe9e3; }
.hd { position: absolute; width: 11px; height: 11px; border: 1px solid #3b8ac4; }
.hd-tl { left: -1px; top: -1px; } .hd-tm { left: 254px; top: -1px; } .hd-tr { right: -1px; top: -1px; }
.hd-ml { left: -1px; top: 112px; } .hd-mr { right: -1px; top: 112px; }
.hd-bl { left: -1px; bottom: -1px; } .hd-bm { left: 254px; bottom: -1px; } .hd-br { right: -1px; bottom: -1px; }
.hscroll { display: flex; height: 14px; background: #fff; border-bottom: 1px solid #bbb; }
.hs-arrow { width: 13px; flex: none; background: #efefef; display: flex; align-items: center; justify-content: center; }
.hs-track { width: 24px; flex: none; background: #e2e2e2; border-left: 1px solid #ccc; border-right: 1px solid #ccc; }
.hs-thumb { flex: 1; background: linear-gradient(#f6f6f6, #fff); }
.tri-l { border: 4px solid transparent; border-right: 4px solid #444; border-left: 0; }
.tri-r { border: 4px solid transparent; border-left: 4px solid #444; border-right: 0; }

.props { flex: 1; min-width: 0; display: flex; flex-direction: column; }
.tabs { height: 29px; flex: none; display: flex; align-items: flex-end; border-bottom: 1px solid #b8b8b8; padding-bottom: 0; }
.tab { height: 25px; padding: 0 11.500px; display: flex; align-items: center; background: #dcdcdc; border: 1px solid #c0c0c0; border-bottom: 0; border-left: 0; border-radius: 3px 3px 0 0; }
.tab-first { border-left: 1px solid #c0c0c0; }
.tab-on { height: 28px; background: #eee; position: relative; top: 1px; border-left: 1px solid #c0c0c0; }
.dock-title-r { height: 20px; margin-left: 0; padding-left: 4px; padding-right: 1px; }
.legend-bar { height: 22px; flex: none; background: #c6c6c6; font-weight: bold; padding-left: 6px; line-height: 21px; border-bottom: 1px solid #b4b4b4; }
.props-body { flex: 1; min-height: 0; display: flex; border-left: 1px solid #c0c0c0; border-right: 1px solid #c0c0c0; overflow: hidden; position: relative; }
.props-scroll { width: 533px; flex: none; padding: 10px 11px 0 12px; overflow: hidden; }
.gh { height: 22px; display: flex; align-items: center; font-weight: bold; }
.gh-sp { margin-top: 7px; }
.gbox-cols + .gh-sp { margin-top: 5px; }
.tri-d { border: 5px solid transparent; border-top: 7px solid #333; border-bottom: 0; margin: 1px 9px 0 2px; }
.tri-r2 { border: 5px solid transparent; border-left: 7px solid #333; border-right: 0; margin: 0 10px 0 4px; }
.gbox { background: #ebebeb; border: 1px solid #d4d4d4; padding-left: 12px; padding-right: 14px; }
.gbox-cols { height: 111px; padding-top: 13px; margin-bottom: 0; }
.gbox-sp { height: 640px; padding-top: 10px; }
.count-row { display: flex; align-items: center; height: 24px; }
.spin { width: 237px; height: 24px; flex: none; display: flex; align-items: center; background: #fff; border: 1px solid #b8b8b8; border-radius: 3px; }
.spin-count { width: 78px; margin-left: 6px; }
.val { flex: 1; padding-left: 4px; white-space: nowrap; }
.clr { width: 14px; height: 12px; margin-right: 10px; flex: none; }
.spin-count .clr { margin-right: 6px; }
.arrows { width: 14px; align-self: stretch; border-left: 1px solid #c8c8c8; display: flex; flex-direction: column; align-items: center; justify-content: center; gap: 3px; flex: none; }
.up { border: 4px solid transparent; border-bottom: 4px solid #555; border-top: 0; display: block; }
.dn { border: 4px solid transparent; border-top: 4px solid #555; border-bottom: 0; display: block; }
.arrows-min .dn { border-top-color: #c0c0c0; }
.cols-ic { width: 24px; height: 24px; margin-left: 10px; }
.chk-row { height: 29px; display: flex; align-items: center; gap: 5px; }
.count-row + .chk-row { margin-top: 4px; }
.sh { height: 23px; font-weight: bold; display: flex; align-items: center; }
.sr { height: 32px; display: flex; align-items: center; justify-content: space-between; }
.spin-focus { border-color: #2e8bc9; }
.sel { background: #308cc6; color: #fff; padding: 0; }
.vscroll { width: 14px; flex: none; margin-left: auto; margin-right: 1px; display: flex; flex-direction: column; border-left: 1px solid #bdbdbd; }
.vs-arrow { height: 14px; flex: none; background: #f4f4f4; display: flex; align-items: center; justify-content: center; }
.vs-track { background: #e2e2e2; border-top: 1px solid #ccc; border-bottom: 1px solid #ccc; }
.vs-track-a { height: 300px; flex: none; }
.vs-thumb { height: 378px; flex: none; background: linear-gradient(90deg, #fff, #f7f7f7); }
.vs-track-b { flex: 1; }
.tri-u { border: 4px solid transparent; border-bottom: 4px solid #444; border-top: 0; }
.tri-d2 { border: 4px solid transparent; border-top: 4px solid #444; border-bottom: 0; }

.status { height: 32px; flex: none; display: flex; align-items: center; border-bottom: 1px solid #bbb; padding: 1px 0 0 6px; position: relative; }
.st-msg { flex: 1; }
.coords { display: flex; gap: 8px; width: 317px; flex: none; white-space: nowrap; }
.combo { width: 134px; height: 24px; flex: none; display: flex; align-items: center; background: #fff; border: 1px solid #b8b8b8; border-radius: 3px; }
.combo-val { flex: 1; padding-left: 4px; }
.combo-arrow { width: 19px; align-self: stretch; border-left: 1px solid #c8c8c8; display: flex; align-items: center; justify-content: center; }
.slider { width: 99px; height: 5px; margin: 0 2px 0 8px; flex: none; background: #e0e0e0; border: 1px solid #c4c4c4; border-radius: 3px; position: relative; }
.slider-fill { display: block; width: 8px; height: 100%; background: #2e8bc9; border-radius: 3px 0 0 3px; }
.slider-knob { position: absolute; left: 6px; top: -5px; width: 13px; height: 13px; background: #f4f4f4; border: 1px solid #b8b8b8; border-radius: 3px; }
```
